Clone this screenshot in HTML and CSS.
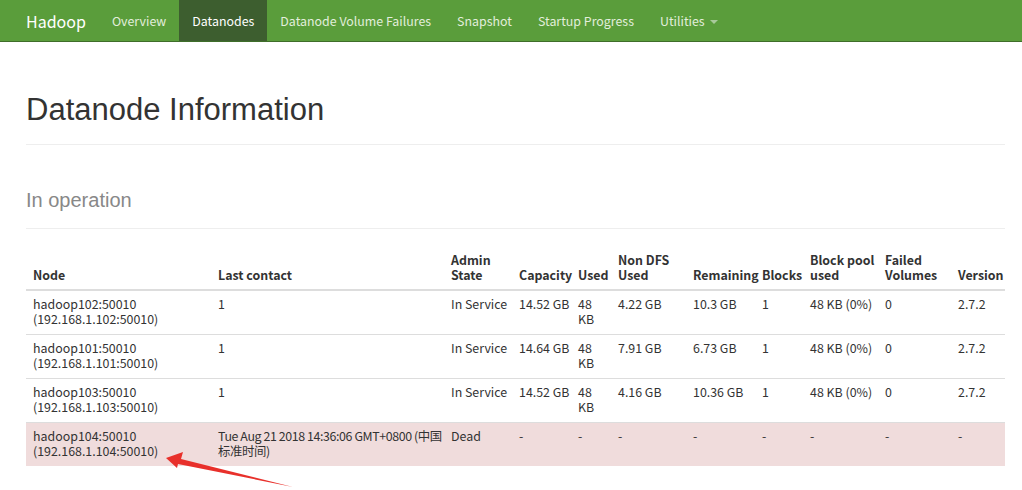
FILE: index.html
```html
<!DOCTYPE html>
<html>
<head>
<meta charset="utf-8">
<link rel="stylesheet" href="styles.css">
</head>
<body>
<nav class="navbar">
  <div class="nav-inner">
    <a class="brand">Hadoop</a>
    <a class="nav-item">Overview</a>
    <a class="nav-item active">Datanodes</a>
    <a class="nav-item">Datanode Volume Failures</a>
    <a class="nav-item">Snapshot</a>
    <a class="nav-item">Startup Progress</a>
    <a class="nav-item">Utilities <span class="caret"></span></a>
  </div>
</nav>
<main class="container">
  <div class="page-header"><h1>Datanode Information</h1></div>
  <div class="section-header"><h2>In operation</h2></div>
  <table class="nodes">
    <colgroup>
      <col class="c-node"><col class="c-contact"><col class="c-admin"><col class="c-cap"><col class="c-used"><col class="c-nondfs"><col class="c-rem"><col class="c-blocks"><col class="c-pool"><col class="c-failed"><col class="c-ver">
    </colgroup>
    <thead>
      <tr><th>Node</th><th>Last contact</th><th>Admin<br>State</th><th>Capacity</th><th>Used</th><th>Non DFS<br>Used</th><th>Remaining</th><th>Blocks</th><th>Block pool<br>used</th><th>Failed<br>Volumes</th><th>Version</th></tr>
    </thead>
    <tbody>
      <tr><td>hadoop102:50010<br>(192.168.1.102:50010)</td><td>1</td><td>In Service</td><td>14.52 GB</td><td>48<br>KB</td><td>4.22 GB</td><td>10.3 GB</td><td>1</td><td>48 KB (0%)</td><td>0</td><td>2.7.2</td></tr>
      <tr><td>hadoop101:50010<br>(192.168.1.101:50010)</td><td>1</td><td>In Service</td><td>14.64 GB</td><td>48<br>KB</td><td>7.91 GB</td><td>6.73 GB</td><td>1</td><td>48 KB (0%)</td><td>0</td><td>2.7.2</td></tr>
      <tr><td>hadoop103:50010<br>(192.168.1.103:50010)</td><td>1</td><td>In Service</td><td>14.52 GB</td><td>48<br>KB</td><td>4.16 GB</td><td>10.36 GB</td><td>1</td><td>48 KB (0%)</td><td>0</td><td>2.7.2</td></tr>
      <tr class="danger"><td>hadoop104:50010<br>(192.168.1.104:50010)</td><td class="long-contact">Tue Aug 21 2018 14:36:06 GMT+0800 (中国<br>标准时间)</td><td>Dead</td><td>-</td><td>-</td><td>-</td><td>-</td><td>-</td><td>-</td><td>-</td><td>-</td></tr>
    </tbody>
  </table>
</main>
<svg class="arrow" width="1022" height="490" viewBox="0 0 1022 490">
  <polygon points="166,458 183,452 181,459 293,487 178,464 177,468" fill="#e8302b"/>
</svg>
</body>
</html>
```
FILE: styles.css
```css
html, body {
  margin: 0;
  padding: 0;
  background: #fff;
}
body {
  font-family: "Noto Sans CJK SC", "Noto Sans", sans-serif;
  font-size: 12.4px;
  color: #333;
  position: relative;
  height: 490px;
  overflow: hidden;
}
.navbar {
  background: #5a9d3b;
  border-bottom: 1px solid #3f6e2a;
  height: 41px;
}
.nav-inner {
  display: flex;
  align-items: stretch;
  height: 41px;
  padding-left: 26px;
}
.brand {
  font-size: 16px;
  color: #fff;
  display: flex;
  align-items: center;
  padding-right: 13px;
}
.nav-item {
  font-size: 12.4px;
  color: #e2eedc;
  display: flex;
  align-items: center;
  padding: 0 13px;
}
.nav-item.active {
  background: #3d5e2f;
  color: #fff;
}
.caret {
  display: inline-block;
  width: 0;
  height: 0;
  border-left: 4px solid transparent;
  border-right: 4px solid transparent;
  border-top: 4px solid #a8c99a;
  margin-left: 5px;
  margin-top: 2px;
}
.container {
  padding: 0 17px 0 26px;
}
.page-header {
  margin-top: 51px;
  padding-bottom: 17px;
  border-bottom: 1px solid #eee;
}
h1 {
  margin: 0;
  font-family: "Liberation Sans", Arial, sans-serif;
  font-weight: 400;
  font-size: 31px;
  line-height: 34px;
  color: #333;
}
.section-header {
  margin-top: 44px;
  padding-bottom: 17px;
  border-bottom: 1px solid #eee;
}
h2 {
  margin: 0;
  font-family: "Liberation Sans", Arial, sans-serif;
  font-weight: 400;
  font-size: 20px;
  line-height: 22px;
  color: #888;
}
.nodes {
  margin-top: 17px;
  border-collapse: collapse;
  table-layout: fixed;
  width: 979px;
}
.c-node { width: 185px; }
.c-contact { width: 233px; }
.c-admin { width: 68px; }
.c-cap { width: 59px; }
.c-used { width: 40px; }
.c-nondfs { width: 75px; }
.c-rem { width: 69px; }
.c-blocks { width: 48px; }
.c-pool { width: 75px; }
.c-failed { width: 73px; }
.c-ver { width: 54px; }
.nodes th {
  text-align: left;
  vertical-align: bottom;
  font-weight: 700;
  line-height: 15px;
  padding: 7px 0 6px 7px;
  border-bottom: 2px solid #ddd;
  color: #333;
}
.nodes td {
  vertical-align: top;
  line-height: 15px;
  padding: 6px 0 7px 7px;
  border-bottom: 1px solid #ddd;
  color: #333;
}
.nodes td.long-contact {
  white-space: nowrap;
  letter-spacing: -0.4px;
}
.nodes tr.danger td {
  background: #f0dcdc;
  border-bottom: none;
}
.arrow {
  position: absolute;
  left: 0;
  top: 0;
  pointer-events: none;
}
```
